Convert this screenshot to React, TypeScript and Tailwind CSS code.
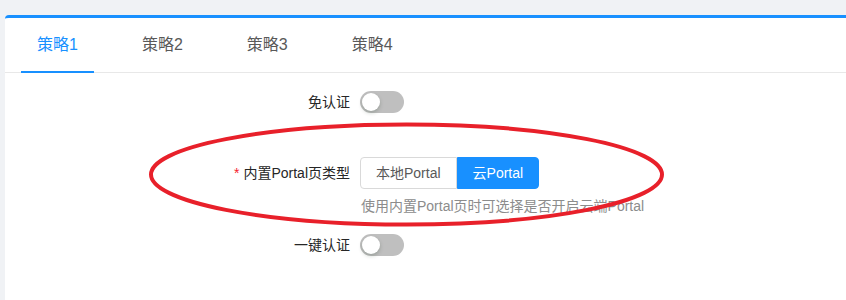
import React from "react";

const FONT = { fontFamily: '"Liberation Sans", "Noto Sans CJK SC", sans-serif' };

function Switch() {
  return (
    <div className="relative h-[22px] w-[44px] rounded-full bg-[#bfbfbf]">
      <div className="absolute left-[2px] top-[2px] h-[18px] w-[18px] rounded-full bg-white shadow-[0_2px_4px_0_rgba(0,35,11,0.2)]" />
    </div>
  );
}

export default function App() {
  const tabs = ["策略1", "策略2", "策略3", "策略4"];
  return (
    <div className="relative h-[300px] w-[846px] overflow-hidden bg-[#f0f2f5]" style={FONT}>
      <div className="ml-[5px] mt-[15px] h-[285px] rounded-tl-[4px] border-t-[3px] border-[#1890ff] bg-white">
        <div className="flex h-[55px] items-stretch border-b border-[#e8e8e8] pl-[16px]">
          {tabs.map((t, i) => (
            <div
              key={t}
              className={
                "relative mr-[32px] flex items-center px-[16px] text-[16px] leading-[24px] " +
                (i === 0 ? "text-[#1890ff]" : "text-[#595959]")
              }
            >
              {t}
              {i === 0 && (
                <div className="absolute bottom-[-1px] left-0 right-0 h-[2px] bg-[#1890ff]" />
              )}
            </div>
          ))}
        </div>

        <div className="pt-[9px] text-[14px]">
          <div className="flex h-[40px] items-center">
            <div className="w-[345px] text-right leading-[20px] text-[#262626]">免认证</div>
            <div className="ml-[10px]">
              <Switch />
            </div>
          </div>

          <div className="mt-[31px] flex h-[40px] items-center">
            <div className="w-[345px] text-right leading-[20px] text-[#262626]">
              <span className="mr-[4px] text-[#f5222d]">*</span>内置Portal页类型
            </div>
            <div className="ml-[10px] flex h-[32px]">
              <div className="flex items-center rounded-l-[4px] border border-[#d9d9d9] px-[15px] leading-[20px] text-[#595959]">
                本地Portal
              </div>
              <div className="flex items-center rounded-r-[4px] border border-[#1890ff] bg-[#1890ff] px-[15px] leading-[20px] text-white">
                云Portal
              </div>
            </div>
          </div>
          <div className="ml-[356px] mt-[3px] leading-[21px] text-[#8c8c8c]">
            使用内置Portal页时可选择是否开启云端Portal
          </div>

          <div className="mt-[8px] flex h-[40px] items-center">
            <div className="w-[345px] text-right leading-[20px] text-[#262626]">一键认证</div>
            <div className="ml-[10px]">
              <Switch />
            </div>
          </div>
        </div>
      </div>

      <svg className="pointer-events-none absolute left-0 top-0" width="846" height="300">
        <ellipse cx="406.5" cy="174.5" rx="255.5" ry="50" fill="none" stroke="#e8202a" strokeWidth="4" />
      </svg>
    </div>
  );
}
